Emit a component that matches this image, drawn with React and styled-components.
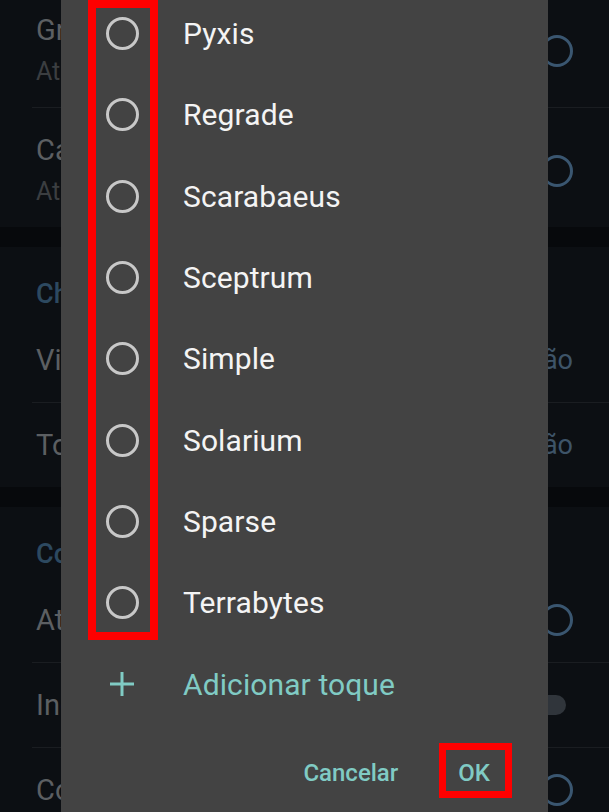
import React from "react";
import styled, { createGlobalStyle } from "styled-components";

const tones = [
  "Pyxis",
  "Regrade",
  "Scarabaeus",
  "Sceptrum",
  "Simple",
  "Solarium",
  "Sparse",
  "Terrabytes",
];

const App = () => {
  return (
    <Page>
      <GlobalStyle />

      {/* settings screen dimmed behind the dialog */}
      <Settings>
        <Section first>
          <Row tall>
            <RowText>
              <Title>Gradualmente mais alto</Title>
              <Subtitle>Ativado</Subtitle>
            </RowText>
            <Radio />
          </Row>
          <Row tall last>
            <RowText>
              <Title>Caixa de entrada</Title>
              <Subtitle>Ativado</Subtitle>
            </RowText>
            <Radio />
          </Row>
        </Section>
        <Band />
        <Section>
          <Header>Chamadas</Header>
          <Row>
            <Title>Vibrar para chamadas</Title>
            <Value>Padrão</Value>
          </Row>
          <Row last>
            <Title>Toque do telefone</Title>
            <Value>Padrão</Value>
          </Row>
        </Section>
        <Band />
        <Section>
          <Header>Configurações</Header>
          <Row>
            <Title>Atender chamadas</Title>
            <Radio />
          </Row>
          <Row>
            <Title>Indicador de toque</Title>
            <Switch />
          </Row>
          <Row last>
            <Title>Confirmar ao encerrar</Title>
            <Radio />
          </Row>
        </Section>
      </Settings>

      <Dialog>
        <List>
          {tones.map((tone) => (
            <Item key={tone}>
              <RadioSlot>
                <Circle />
              </RadioSlot>
              <ItemLabel>{tone}</ItemLabel>
            </Item>
          ))}
          <Item>
            <RadioSlot>
              <svg width="30" height="30" viewBox="0 0 30 30">
                <path
                  d="M15 3 V27 M3 15 H27"
                  stroke="#80cbc4"
                  strokeWidth="3"
                  fill="none"
                />
              </svg>
            </RadioSlot>
            <ItemLabel accent>Adicionar toque</ItemLabel>
          </Item>
        </List>
        <Buttons>
          <TextButton>Cancelar</TextButton>
          <TextButton>OK</TextButton>
        </Buttons>
      </Dialog>

      {/* red annotation boxes */}
      <Highlight left={88} top={0} width={70} height={640} />
      <Highlight left={439} top={743} width={73} height={55} thin />
    </Page>
  );
};

const GlobalStyle = createGlobalStyle`
  html, body {
    margin: 0;
    padding: 0;
    background: #0c0f13;
  }
  body {
    font-family: Roboto, "Liberation Sans", sans-serif;
  }
`;

const Page = styled.div`
  position: relative;
  width: 609px;
  height: 812px;
  overflow: hidden;
  background: #0c0f13;
`;

const Settings = styled.div`
  display: flex;
  flex-direction: column;
`;

const Section = styled.div`
  display: flex;
  flex-direction: column;
  margin-top: ${(p) => (p.first ? "-12px" : "0")};
`;

const Band = styled.div`
  height: 20px;
  background: #07090c;
`;

const Header = styled.div`
  padding: 32px 36px 9px;
  line-height: 30px;
  font-size: 27px;
  font-weight: 500;
  color: #2d4960;
`;

const Row = styled.div`
  display: flex;
  align-items: center;
  justify-content: space-between;
  margin-left: 32px;
  padding: ${(p) => (p.tall ? "24px 36px 17px 4px" : "0 36px 0 4px")};
  height: ${(p) => (p.tall ? "auto" : "84px")};
  border-bottom: ${(p) => (p.last ? "none" : "1px solid #1a1d21")};
`;

const RowText = styled.div`
  display: flex;
  flex-direction: column;
  gap: 6px;
`;

const Title = styled.div`
  font-size: 29px;
  line-height: 36px;
  color: #5c5f62;
  white-space: nowrap;
`;

const Subtitle = styled.div`
  font-size: 25px;
  line-height: 36px;
  color: #3b3e41;
`;

const Value = styled.div`
  font-size: 27px;
  color: #3e5468;
`;

const Radio = styled.div`
  width: 26px;
  height: 26px;
  border: 3px solid #3a5670;
  border-radius: 50%;
`;

const Switch = styled.div`
  width: 36px;
  height: 20px;
  border-radius: 10px;
  background: #30353b;
  margin-right: 7px;
`;

const Dialog = styled.div`
  position: absolute;
  left: 61px;
  top: 0;
  width: 487px;
  height: 812px;
  background: #434343;
  display: flex;
  flex-direction: column;
`;

const List = styled.div`
  display: flex;
  flex-direction: column;
  margin-top: -7px;
`;

const Item = styled.div`
  display: flex;
  align-items: center;
  height: 81.3px;
`;

const RadioSlot = styled.div`
  width: 122px;
  display: flex;
  justify-content: center;
  align-items: center;
`;

const Circle = styled.div`
  width: 27px;
  height: 27px;
  border: 3px solid #c8c8c8;
  border-radius: 50%;
`;

const ItemLabel = styled.div`
  font-size: 30px;
  letter-spacing: 0.1px;
  color: ${(p) => (p.accent ? "#80cbc4" : "#f4f4f4")};
`;

const Buttons = styled.div`
  display: flex;
  justify-content: flex-end;
  gap: 60px;
  padding: 29px 58px 0 0;
`;

const TextButton = styled.div`
  font-size: 24px;
  font-weight: 500;
  line-height: 38px;
  color: #80cbc4;
`;

const Highlight = styled.div`
  position: absolute;
  left: ${(p) => p.left}px;
  top: ${(p) => p.top}px;
  width: ${(p) => p.width}px;
  height: ${(p) => p.height}px;
  box-sizing: border-box;
  border: ${(p) => (p.thin ? "7px" : "8px")} solid #ff0000;
`;

export default App;
